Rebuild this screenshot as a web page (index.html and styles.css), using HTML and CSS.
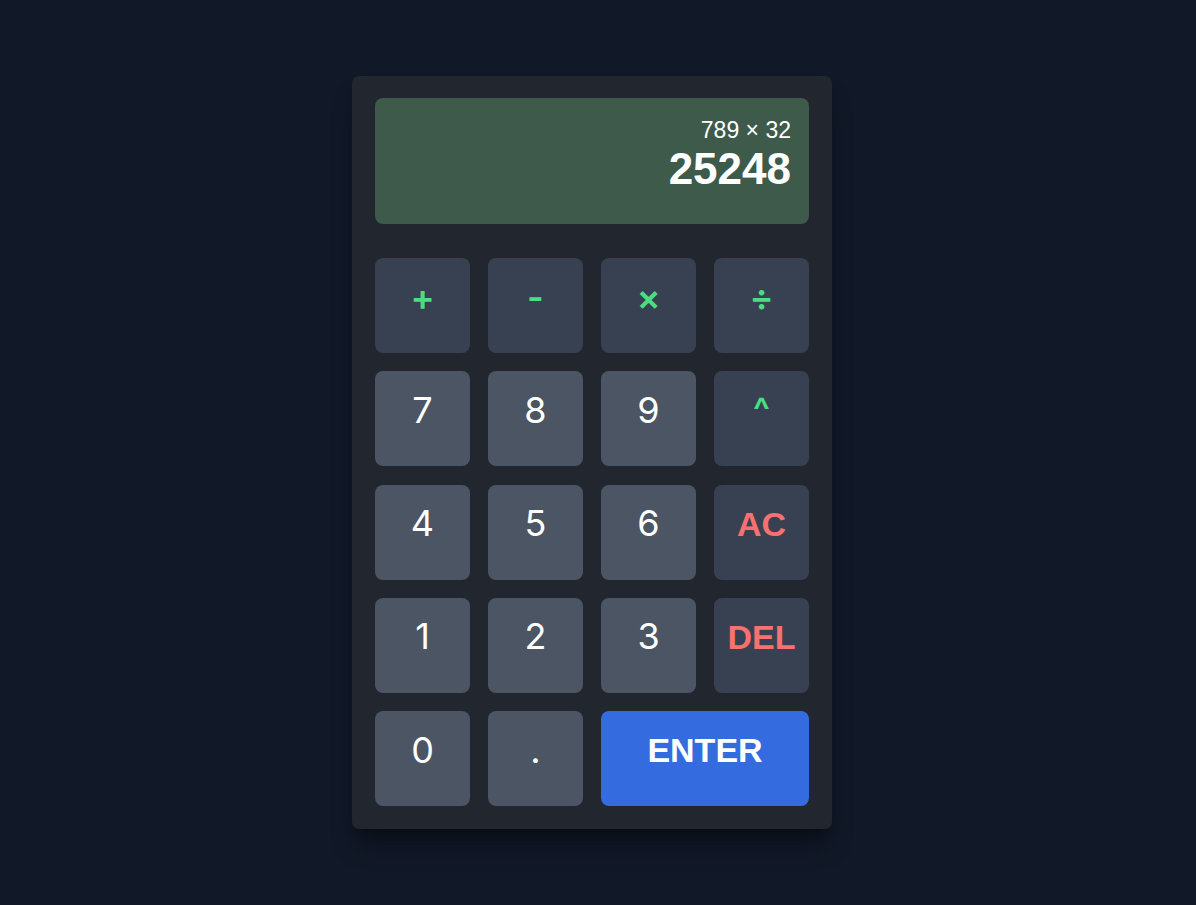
FILE: index.html
```html
<!DOCTYPE html>
<html lang="en">
<head>
<meta charset="utf-8">
<title>Calculator</title>
<link rel="stylesheet" href="styles.css">
</head>
<body>
<main class="page">
  <div class="calc">
    <div class="display">
      <div class="expr">789 × 32</div>
      <div class="result">25248</div>
    </div>
    <div class="keys">
      <button class="key op">+</button>
      <button class="key op">-</button>
      <button class="key op">×</button>
      <button class="key op">÷</button>
      <button class="key num">7</button>
      <button class="key num">8</button>
      <button class="key num">9</button>
      <button class="key op">^</button>
      <button class="key num">4</button>
      <button class="key num">5</button>
      <button class="key num">6</button>
      <button class="key danger">AC</button>
      <button class="key num">1</button>
      <button class="key num">2</button>
      <button class="key num">3</button>
      <button class="key danger">DEL</button>
      <button class="key num">0</button>
      <button class="key num">.</button>
      <button class="key enter">ENTER</button>
    </div>
  </div>
</main>
</body>
</html>
```

FILE: styles.css
```css
* { box-sizing: border-box; }
html, body { margin: 0; padding: 0; }
body {
  background: #111827;
  font-family: "Liberation Sans", Arial, sans-serif;
}
.page {
  min-height: 100vh;
  display: flex;
  align-items: center;
  justify-content: center;
  padding-right: 12px;
}
.calc {
  width: 480px;
  background: #22262e;
  border-radius: 7px;
  padding: 22px 23px 23px 23px;
  box-shadow: 0 20px 25px -5px rgba(0,0,0,0.35), 0 8px 10px -6px rgba(0,0,0,0.3);
}
.display {
  height: 126px;
  background: #3d5a4a;
  border-radius: 8px;
  padding: 18px 18px 0 18px;
  text-align: right;
  color: #fff;
}
.expr {
  font-size: 23px;
  line-height: 28px;
}
.result {
  margin-top: 3px;
  font-size: 44px;
  line-height: 44px;
  font-weight: 700;
}
.keys {
  margin-top: 34px;
  display: grid;
  grid-template-columns: repeat(4, 1fr);
  grid-auto-rows: 95px;
  column-gap: 18px;
  row-gap: 18.25px;
}
.key {
  border: none;
  border-radius: 8px;
  display: flex;
  align-items: center;
  justify-content: center;
  padding: 0 0 16px 0;
  font-family: "Liberation Sans", Arial, sans-serif;
  font-size: 34px;
  font-weight: 700;
  color: #fff;
  cursor: pointer;
}
.num {
  background: #4b5563;
  font-family: Inter, "Noto Sans", sans-serif;
  font-size: 36px;
  font-weight: 400;
  padding-bottom: 18px;
}
.op {
  background: #374151;
  color: #4ade80;
  font-family: Inter, "Noto Sans", sans-serif;
  font-size: 36px;
  font-weight: 600;
  padding-bottom: 18px;
}
.danger {
  background: #374151;
  color: #f87171;
}
.enter {
  grid-column: span 2;
  background: #346ce0;
  color: #fff;
}
```
